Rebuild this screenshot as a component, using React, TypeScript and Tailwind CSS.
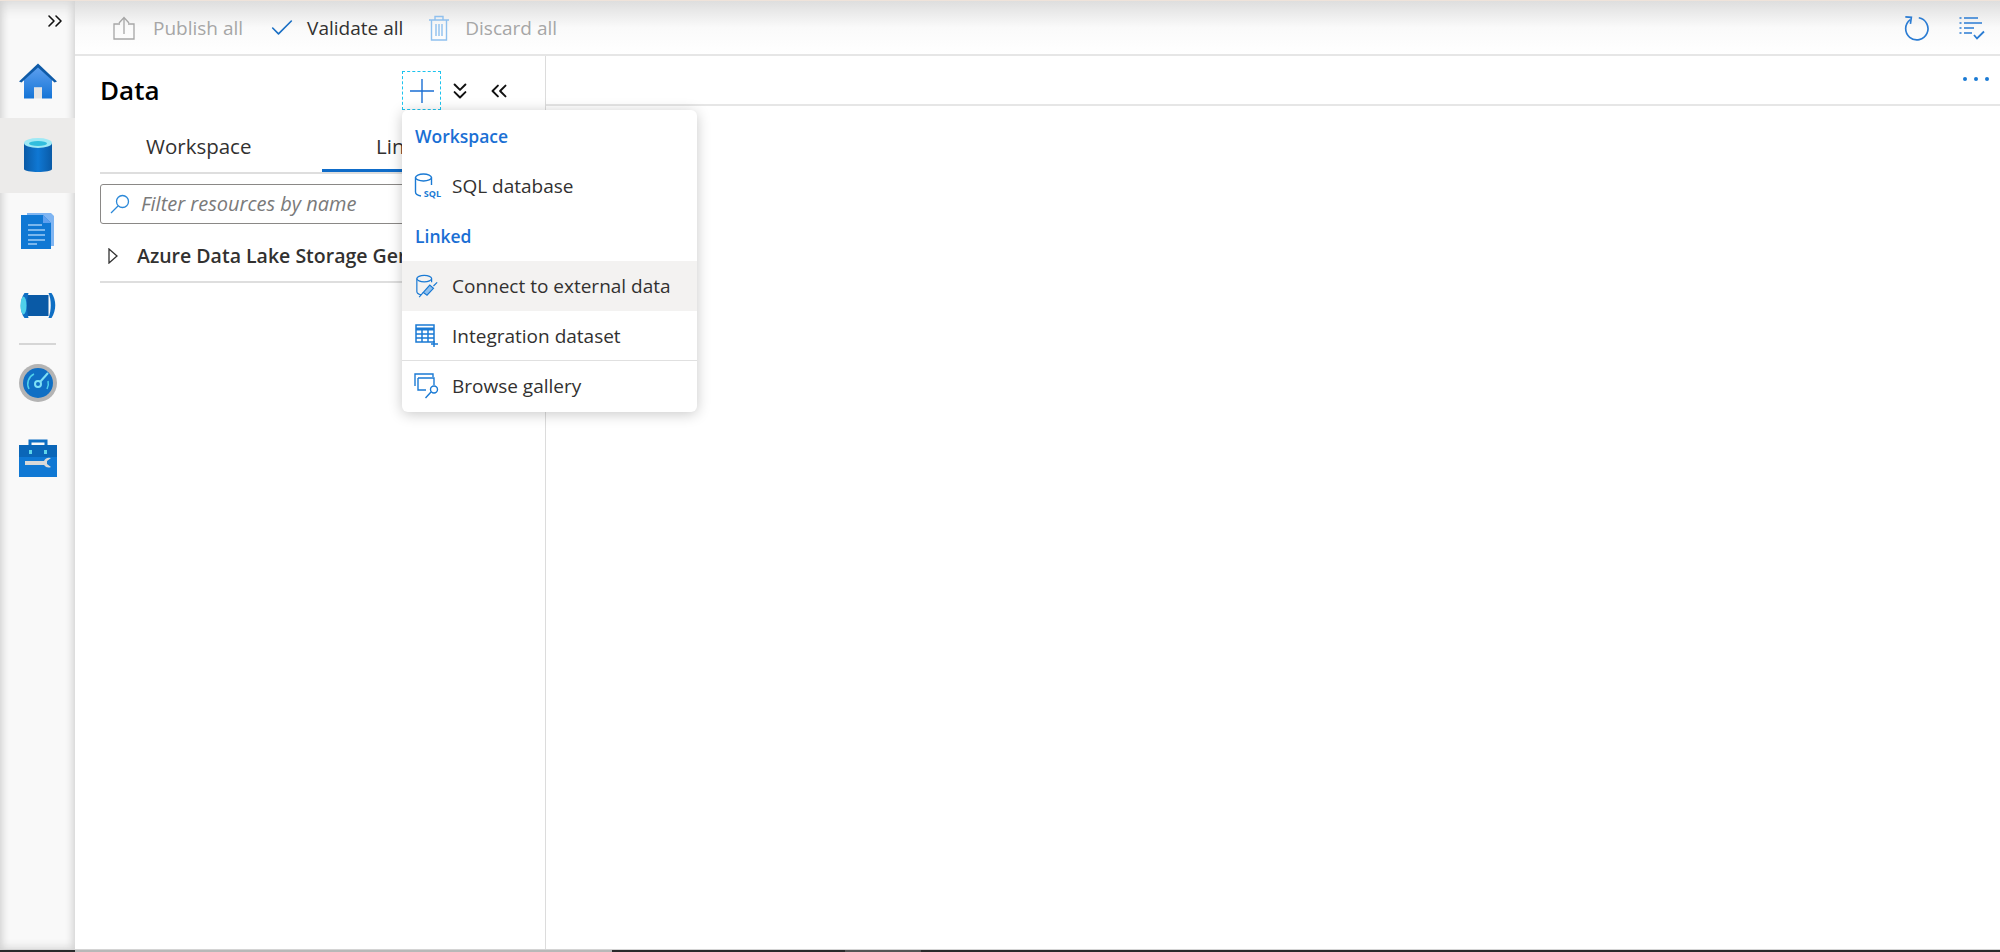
import React from 'react';
import { ChevronsRight, ChevronsDown, ChevronsLeft, Check } from 'lucide-react';

const font = "font-['Open_Sans','Noto_Sans',sans-serif]";

const HomeIcon = () => (
  <svg width="38" height="36" viewBox="1 2 38 35">
    <defs>
      <linearGradient id="homeFill" x1="0" y1="0" x2="0" y2="1">
        <stop offset="0" stopColor="#5ea0ef" />
        <stop offset="1" stopColor="#1574d6" />
      </linearGradient>
    </defs>
    <path d="M6 18 L20 5 L34 18 V37 H24 V26 H16 V37 H6 Z" fill="url(#homeFill)" />
    <path d="M16 26 H24 V37 H16 Z" fill="#e4e4e4" />
    <path d="M1 20 L20 2 L39 20 L36.500 21 L20 6 L3.500 21 Z" fill="#0f5ba8" />
  </svg>
);

const DatabaseIcon = () => (
  <svg width="30" height="38" viewBox="0 0 30 38">
    <defs>
      <linearGradient id="dbFill" x1="0" y1="0" x2="1" y2="0">
        <stop offset="0" stopColor="#0a5aa6" />
        <stop offset="0.5" stopColor="#0f78d4" />
        <stop offset="1" stopColor="#0a5aa6" />
      </linearGradient>
    </defs>
    <path d="M1 6 V32 C1 36 29 36 29 32 V6 Z" fill="url(#dbFill)" />
    <ellipse cx="15" cy="6" rx="14" ry="5" fill="#9fe9f5" />
    <ellipse cx="15" cy="6.500" rx="9" ry="2.500" fill="#32bedd" />
  </svg>
);

const DocIcon = () => (
  <svg width="34" height="38" viewBox="0 0 34 38">
    <path d="M6 1 H30 L33 4 V34 H6 Z" fill="#7fb5f2" />
    <path d="M0 3 H22 L30 11 V37 H0 Z" fill="#0f78d4" />
    <path d="M22 3 L30 11 H22 Z" fill="#5ea0ef" />
    <path d="M7 13 H21 M7 18 H24 M7 23 H24 M7 28 H24 M7 32 H16" stroke="#9fcbf5" strokeWidth="1.500" />
  </svg>
);

const PipeIcon = () => (
  <svg width="37" height="25" viewBox="1 1 36 25">
    <rect x="8" y="3" width="22" height="21" fill="#0a5aa6" />
    <path d="M6 1 H10 C8 8 8 18 10 26 H6 C1 20 1 8 6 1 Z" fill="#0f6fc4" />
    <ellipse cx="5" cy="13.500" rx="3" ry="9" fill="#4fd0ea" />
    <path d="M30 1 H33 C38 8 38 18 33 26 H30 C33 18 33 8 30 1 Z" fill="#0f6fc4" />
  </svg>
);

const MonitorIcon = () => (
  <svg width="38" height="38" viewBox="0 0 38 38">
    <circle cx="19" cy="19" r="19" fill="#b4b4b4" />
    <circle cx="19" cy="19" r="15" fill="#0f6fc4" />
    <circle cx="19" cy="20" r="3" fill="none" stroke="#7fe0f5" strokeWidth="2" />
    <path d="M21 18 L29 9" stroke="#7fe0f5" strokeWidth="2" />
    <path d="M10 25 A11 11 0 0 1 15 10 M28 25 A11 11 0 0 0 29 17" fill="none" stroke="#4fd0ea" strokeWidth="1.500" />
  </svg>
);

const ToolboxIcon = () => (
  <svg width="38" height="38" viewBox="0 0 38 38">
    <path d="M11 7 V2 H27 V7" fill="none" stroke="#0f6fc4" strokeWidth="3" />
    <rect x="0" y="6" width="38" height="32" fill="#0f78d4" />
    <rect x="0" y="6" width="38" height="12" fill="#0a66b8" />
    <rect x="10" y="11" width="3" height="4" fill="#5fd5ea" />
    <rect x="25" y="11" width="3" height="4" fill="#5fd5ea" />
    <path d="M6 22 H25 A6 6 0 0 1 32 19 L28 22 V25 L32 28 A6 6 0 0 1 25 26 H6 Z" fill="#d8d8d8" />
  </svg>
);

const PublishIcon = () => (
  <svg width="22" height="24" viewBox="0 0 22 24" fill="none" stroke="#a6a6a6" strokeWidth="1.300">
    <path d="M7 8 H1 V23 H21 V8 H15" />
    <path d="M11 18 V2 M6 7 L11 1.500 L16 7" />
  </svg>
);

const TrashIcon = () => (
  <svg width="20" height="26" viewBox="0 0 20 26" fill="none" stroke="#8fc0ee" strokeWidth="1.400">
    <path d="M0 5 H20 M6 5 V1.500 H14 V5 M2.500 5 V25 H17.500 V5" />
    <path d="M7 9 V21 M10 9 V21 M13 9 V21" />
  </svg>
);

const RefreshIcon = () => (
  <svg width="26" height="26" viewBox="0 0 28 28" fill="none" stroke="#2b7cd3" strokeWidth="1.800">
    <path d="M8 5 A12 12 0 1 0 17 3" />
    <path d="M2.500 2 L9 2.500 L8 9.500" />
  </svg>
);

const TaskListIcon = () => (
  <svg width="26" height="24" viewBox="0 0 26 24" fill="none" stroke="#2b7cd3" strokeWidth="1.500">
    <path d="M5 2 H19 M5 7 H23 M5 12 H15 M5 17 H13" />
    <path d="M0.500 2 H2.500 M0.500 7 H2.500 M0.500 12 H2.500 M0.500 17 H2.500" />
    <path d="M15 19 L18 22.500 L25 15.500" strokeWidth="1.800" />
  </svg>
);

const PlusIcon = () => (
  <svg width="24" height="24" viewBox="0 0 24 24" fill="none" stroke="#1a6fd4" strokeWidth="1.400">
    <path d="M12 0 V24 M0 12 H24" />
  </svg>
);

const SearchIcon = () => (
  <svg width="20" height="20" viewBox="0 0 20 20" fill="none" stroke="#2b88d8" strokeWidth="1.300">
    <circle cx="12.500" cy="7.500" r="6" />
    <path d="M8 12 L1 19" />
  </svg>
);

const SqlIcon = () => (
  <div className="relative w-[26px] h-[26px]">
    <svg width="26" height="26" viewBox="0 0 26 26" fill="none" stroke="#1a7ad4" strokeWidth="1.400">
      <ellipse cx="9.500" cy="4.500" rx="8" ry="3.500" />
      <path d="M1.500 4.500 V19 C1.500 21 4 22.500 7 23 M17.500 4.500 V12" />
    </svg>
    <span className="absolute right-[-1px] bottom-0 text-[9px] leading-[10px] font-bold text-[#1a7ad4]">SQL</span>
  </div>
);

const ConnectIcon = () => (
  <svg width="24" height="26" viewBox="0 0 26 26" fill="none" stroke="#1a7ad4" strokeWidth="1.300">
    <ellipse cx="10" cy="5" rx="8" ry="3.500" />
    <path d="M2 5 V19 C2 21 4 22 6.500 22.500 M18 5 V9" />
    <path d="M9 20 L16 12 L20 15.500 L13 23 Z" fill="#8fc0ee" />
    <path d="M20 13 L24 9 M9 20 L4.500 25" />
  </svg>
);

const DatasetIcon = () => (
  <svg width="24" height="24" viewBox="0 0 24 24" fill="none" stroke="#1a7ad4" strokeWidth="1.500">
    <path d="M1 1 H19 V18 H1 Z" />
    <path d="M1 5 H19" strokeWidth="3" />
    <path d="M1 10 H19 M1 14 H19 M7 5 V18 M13 5 V18" />
    <path d="M19 17 V23 M16 20 H23" />
  </svg>
);

const GalleryIcon = () => (
  <svg width="26" height="26" viewBox="0 0 26 26" fill="none" stroke="#1a7ad4" strokeWidth="1.400">
    <path d="M1 13 V1 H19 V4" />
    <path d="M4 5 H20 V12 M4 5 V17 H12" />
    <circle cx="20" cy="16.500" r="3.500" />
    <path d="M17 19 L11.500 25" />
  </svg>
);

const MenuItem = ({ icon, label, className }: { icon: React.ReactNode; label: string; className?: string }) => (
  <div className={`flex items-center h-[50px] pl-[12px] text-[19px] text-[#323130] ${className ?? ''}`}>
    <div className="w-[26px] flex justify-center">{icon}</div>
    <span className="ml-[12px] pt-[1px]">{label}</span>
  </div>
);

export default function App() {
  return (
    <div className={`${font} relative flex flex-col h-[952px] w-full overflow-hidden bg-white text-[#201f1e]`}>
      <div className="h-[1px] shrink-0 bg-[#efe3da]" />
      <div className="flex flex-1 min-h-0">
        {/* Left rail */}
        <div className="w-[75px] shrink-0 flex flex-col bg-[#f9f9f9] shadow-[inset_8px_0_8px_-6px_#d0d0d0,inset_-8px_0_8px_-6px_#d0d0d0,inset_0_14px_14px_-8px_#dcdcdc,inset_0_-8px_8px_-6px_#dcdcdc]">
          <div className="h-[42px] flex items-start justify-end pt-[8px] pr-[8px]">
            <ChevronsRight size={24} strokeWidth={1.600} className="text-[#111]" />
          </div>
          <div className="h-[75px] flex items-center justify-center">
            <HomeIcon />
          </div>
          <div className="h-[75px] flex items-center justify-center bg-[#ecebea]">
            <DatabaseIcon />
          </div>
          <div className="h-[75px] flex items-center justify-center">
            <DocIcon />
          </div>
          <div className="h-[75px] flex items-center justify-center">
            <PipeIcon />
          </div>
          <div className="mx-[19px] h-[2px] bg-[#d6d6d6]" />
          <div className="h-[76px] flex items-center justify-center">
            <MonitorIcon />
          </div>
          <div className="h-[74px] flex items-center justify-center">
            <ToolboxIcon />
          </div>
        </div>

        <div className="flex-1 min-w-0 flex flex-col">
          {/* Toolbar */}
          <div className="h-[55px] shrink-0 flex items-center border-b-2 border-[#e6e6e6] bg-gradient-to-b from-[#dedede] via-[#fafafa] to-white pl-[38px] pr-[15px] text-[19px]">
            <PublishIcon />
            <span className="ml-[18px] pt-[1px] text-[#a6a6a6]">Publish all</span>
            <Check size={28} strokeWidth={1.400} className="ml-[25px] text-[#1a6fc4]" />
            <span className="ml-[11px] pt-[1px] text-[#323130]">Validate all</span>
            <div className="ml-[26px]"><TrashIcon /></div>
            <span className="ml-[16px] pt-[1px] text-[#a6a6a6]">Discard all</span>
            <div className="ml-auto flex items-center gap-[30px]">
              <RefreshIcon />
              <TaskListIcon />
            </div>
          </div>

          <div className="flex flex-1 min-h-0">
            {/* Data panel */}
            <div className="w-[471px] shrink-0 border-r border-[#dcdcdc] pl-[25px] pr-[24px]">
              <div className="h-[69px] flex items-center">
                <span className="text-[26px] font-semibold text-black">Data</span>
                <div className="ml-auto flex items-center">
                  <div className="w-[39px] h-[39px] flex items-center justify-center border border-dashed border-[#1cc3ee]">
                    <PlusIcon />
                  </div>
                  <ChevronsDown size={26} strokeWidth={1.800} className="ml-[6px] text-[#111]" />
                  <ChevronsLeft size={26} strokeWidth={1.800} className="ml-[13px] mr-[9px] text-[#111]" />
                </div>
              </div>
              <div className="h-[49px] flex border-b-2 border-[#dedede] text-[20.500px] text-[#323130]">
                <div className="w-[222px] flex items-center pl-[46px] pb-[4px]">Workspace</div>
                <div className="relative flex-1 flex items-center pl-[54px] pb-[4px]">
                  Linked
                  <div className="absolute left-0 right-0 bottom-0 h-[3px] bg-[#0f6cc9]" />
                </div>
              </div>
              <div className="mt-[10px] h-[40px] flex items-center rounded-[3px] border border-[#8a8886] pl-[9px]">
                <SearchIcon />
                <span className="ml-[11px] text-[20px] italic text-[#7a7a7a]">Filter resources by name</span>
              </div>
              <div className="h-[59px] flex items-center pt-[6px] border-b-2 border-[#dedede]">
                <svg width="10" height="16" viewBox="0 0 10 16" className="ml-[8px]" fill="none" stroke="#333" strokeWidth="1.300">
                  <path d="M1 1 L9 8 L1 15 Z" />
                </svg>
                <span className="ml-[19px] text-[19.500px] font-semibold text-[#323130] whitespace-nowrap">Azure Data Lake Storage Gen2</span>
              </div>
            </div>

            {/* Right pane */}
            <div className="flex-1 min-w-0">
              <div className="h-[50px] flex items-center justify-end gap-[7px] pr-[11px] pb-[3px] border-b-2 border-[#e6e6e6]">
                <span className="w-[4px] h-[4px] rounded-full bg-[#1a7ad4]" />
                <span className="w-[4px] h-[4px] rounded-full bg-[#1a7ad4]" />
                <span className="w-[4px] h-[4px] rounded-full bg-[#1a7ad4]" />
              </div>
            </div>
          </div>
        </div>
      </div>

      {/* Taskbar sliver */}
      <div className="h-[3px] shrink-0 flex border-t border-[#d4d4d4] bg-[#2a2a2a]">
        <div className="w-[75px]" />
        <div className="w-[537px] bg-[#b8b8b8]" />
        <div className="w-[233px]" />
        <div className="w-[76px] bg-[#555555]" />
      </div>

      {/* New menu */}
      <div className="absolute left-[402px] top-[110px] w-[295px] h-[302px] rounded-[6px] bg-white shadow-[0_2px_14px_rgba(0,0,0,0.22)] overflow-hidden">
        <div className="h-[51px] flex items-center pl-[13px] pt-[1px] text-[17.500px] font-semibold text-[#1a6fd4]">Workspace</div>
        <MenuItem icon={<SqlIcon />} label="SQL database" />
        <div className="h-[50px] flex items-center pl-[13px] text-[17.500px] font-semibold text-[#1a6fd4]">Linked</div>
        <MenuItem icon={<ConnectIcon />} label="Connect to external data" className="bg-[#f3f2f1]" />
        <MenuItem icon={<DatasetIcon />} label="Integration dataset" className="border-b border-[#e0e0e0]" />
        <MenuItem icon={<GalleryIcon />} label="Browse gallery" />
      </div>
    </div>
  );
}
